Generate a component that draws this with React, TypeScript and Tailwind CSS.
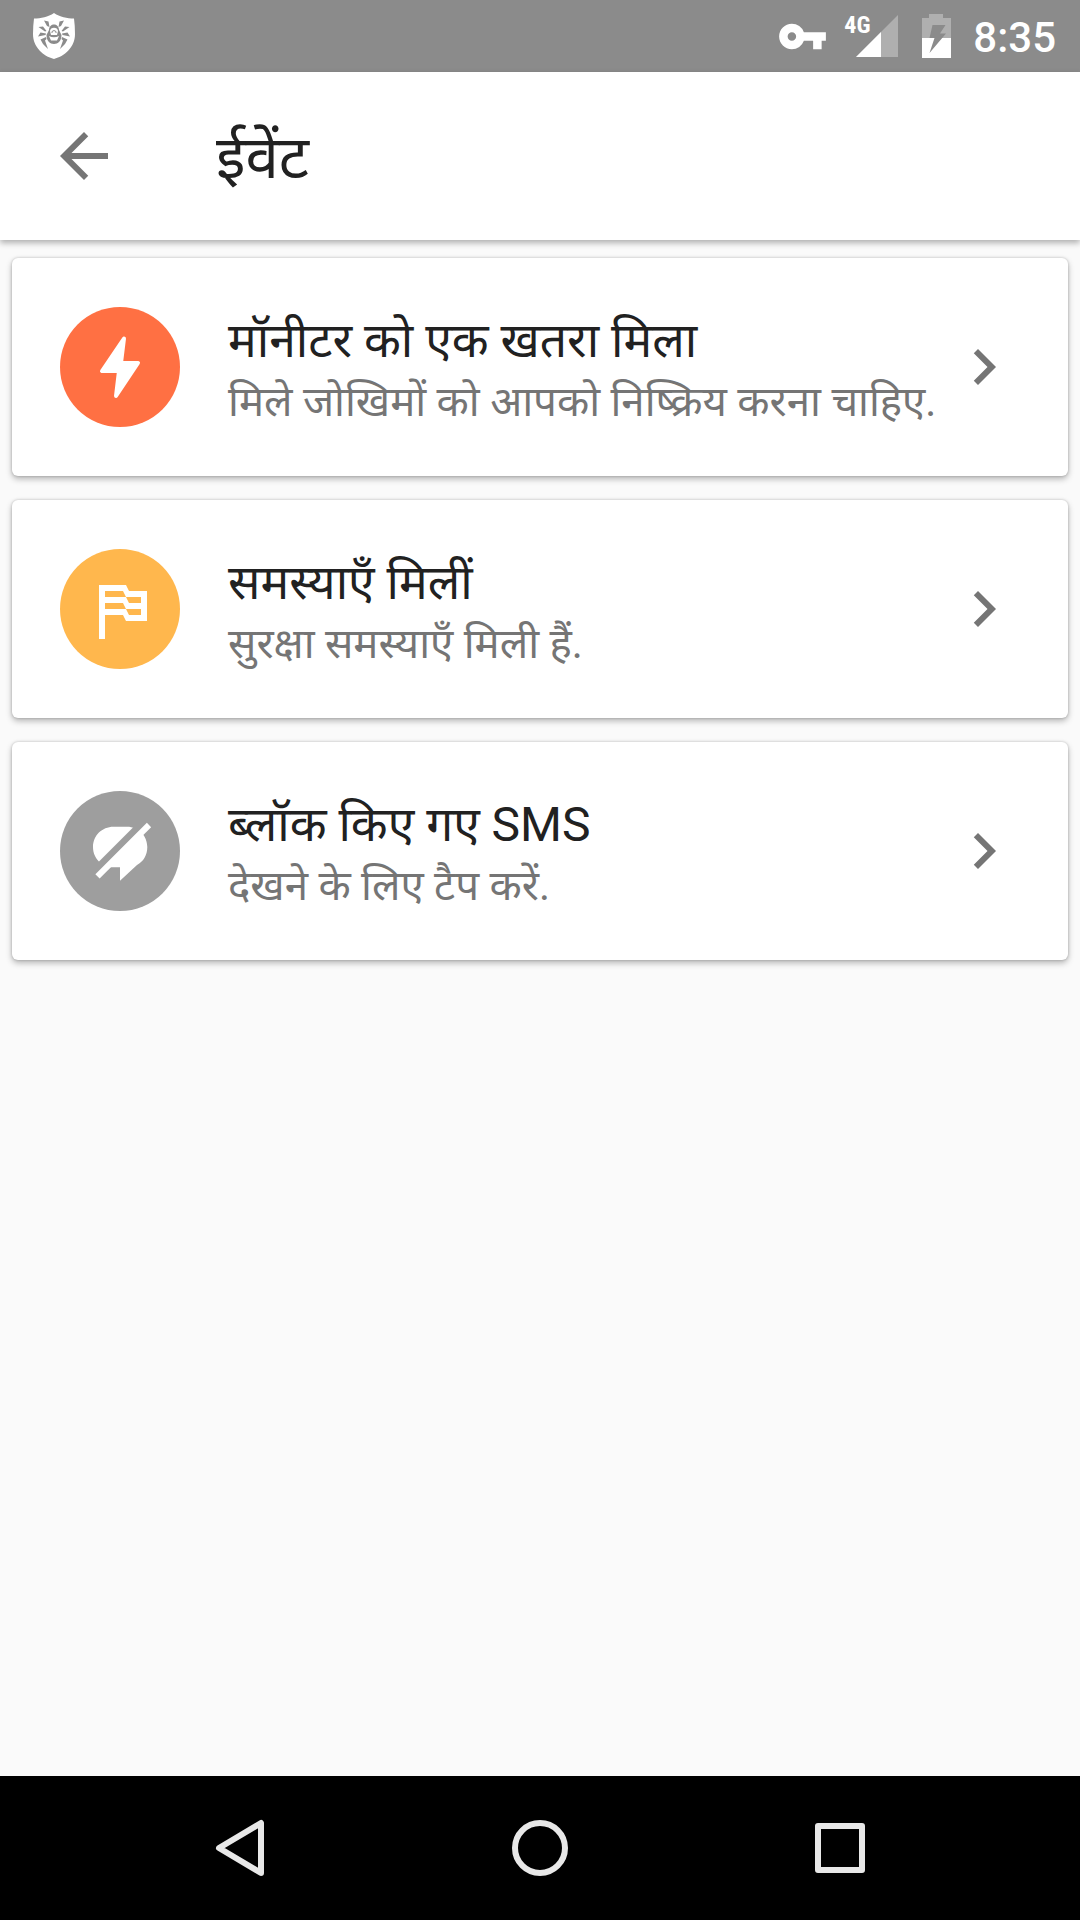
import React from 'react';
import { MdArrowBack, MdChevronRight, MdVpnKey } from 'react-icons/md';

interface EventItem {
    id: string;
    title: string;
    description: string;
    circle: string;
    icon: React.ReactNode;
}

const ThreatIcon: React.FC = () => (
    <svg viewBox="0 0 120 120" className="size-full" aria-hidden="true">
        <path
            d="M64 31.500L42 64H59L56 89L78 56H61Z"
            fill="#fff"
            stroke="#fff"
            strokeWidth="4"
            strokeLinejoin="round"
        />
    </svg>
);

const FlagIcon: React.FC = () => (
    <svg viewBox="0 0 120 120" className="size-full" aria-hidden="true">
        <path
            fill="#fff"
            fillRule="evenodd"
            d="M39 36H66L69 42H87V72H66L63 66H45V90H39Z M45 42V48H66L63 42Z M66 48L69 54H81V48Z M45 54V60H66L63 54Z M66 60L69 66H81V60Z"
        />
    </svg>
);

const BlockedSmsIcon: React.FC = () => (
    <svg viewBox="0 0 120 120" className="size-full" aria-hidden="true">
        <path
            d="M53.500 35.700H67C78.500 35.700 87.300 44.500 87.300 56C87.300 64 83.500 70.500 77 74L60 89.700V76.300H53.500C42 76.300 33 67.500 33 56S42 35.700 53.500 35.700Z"
            fill="#fff"
        />
        <path d="M28 86.500L88 26.500" stroke="#9e9e9e" strokeWidth="7" />
        <path d="M37.500 85.300L89 34" stroke="#fff" strokeWidth="6" />
    </svg>
);

const events: EventItem[] = [
    {
        id: 'threat',
        title: 'मॉनीटर को एक खतरा मिला',
        description: 'मिले जोखिमों को आपको निष्क्रिय करना चाहिए.',
        circle: 'bg-[#ff7043]',
        icon: <ThreatIcon />,
    },
    {
        id: 'problems',
        title: 'समस्याएँ मिलीं',
        description: 'सुरक्षा समस्याएँ मिली हैं.',
        circle: 'bg-[#ffb74d]',
        icon: <FlagIcon />,
    },
    {
        id: 'sms',
        title: 'ब्लॉक किए गए SMS',
        description: 'देखने के लिए टैप करें.',
        circle: 'bg-[#9e9e9e]',
        icon: <BlockedSmsIcon />,
    },
];

const ShieldIcon: React.FC = () => (
    <svg viewBox="0 0 42 46" className="h-[46px] w-[42px]" aria-hidden="true">
        <path d="M21 0C27 4 34 5.500 41 5.500Q42 13 42 21C42 34 32 43 21 46C10 43 0 34 0 21Q0 13 1 5.500C8 5.500 15 4 21 0Z" fill="#fff" />
        {/* Spider legs */}
        <g fill="#8b8b8b">
            <path d="M11 7.500L15.500 8.500L16.500 14L14 13Z M31 7.500L26.500 8.500L25.500 14L28 13Z" />
            <path d="M5.500 14L10 13.500L13.500 18L12 18.500Z M36.500 14L32 13.500L28.500 18L30 18.500Z" />
            <path d="M5 23.500L7.500 19.500L13 20.500L12.500 22Z M37 23.500L34.500 19.500L29 20.500L29.500 22Z" />
            <path d="M7.500 26.500L13 24L13.500 26L12 27.500L15 36L10 31Z M34.500 26.500L29 24L28.500 26L30 27.500L27 36L32 31Z" />
            <path d="M16 17C16 9.500 26 9.500 26 17L28.500 22C28.500 28 25 31 21 31S13.500 28 13.500 22Z" />
        </g>
        <path d="M17 18C17 13.500 25 13.500 25 18L24 22H18Z" fill="#fff" />
        <path d="M16 23Q21 25.500 26 23L24 27.500H18Z" fill="#fff" />
        <path d="M19 20V18.500Q21 16.500 23 18.500V20" fill="none" stroke="#8b8b8b" />
    </svg>
);

const SignalIcon: React.FC = () => (
    <svg viewBox="0 0 42 42" className="size-[42px]" aria-hidden="true">
        <path d="M42 0V42H0Z" fill="#afafaf" />
        <path d="M25 17V42H0Z" fill="#fff" />
    </svg>
);

const BatteryIcon: React.FC = () => (
    <svg viewBox="0 0 29 44" className="h-11 w-[29px]" aria-hidden="true">
        <path d="M7 0H21V4H29V24H0V4H7Z" fill="#afafaf" />
        <path d="M0 24H29V44H0Z" fill="#fff" />
        <path d="M10.500 11H23.500L18 19.500H24L7.500 39L12.500 24H7.500Z" fill="#8b8b8b" />
    </svg>
);

const StatusBar: React.FC = () => (
    <div className="flex h-[72px] shrink-0 items-center justify-between bg-[#8b8b8b] pr-6 pl-[33px] text-white">
        <ShieldIcon />
        <div className="flex items-center">
            <MdVpnKey size={51} />
            <div className="relative ml-7">
                <SignalIcon />
                <span className="absolute -top-1 -left-3 font-['Roboto_Condensed',Roboto,sans-serif] text-2xl leading-7 font-bold">
                    4G
                </span>
            </div>
            <div className="ml-6">
                <BatteryIcon />
            </div>
            <span className="ml-[22px] pt-1 text-[42px] leading-none font-medium">8:35</span>
        </div>
    </div>
);

const EventCard: React.FC<{ event: EventItem }> = ({ event }) => (
    <a
        href={`#${event.id}`}
        className="flex h-[218px] items-center rounded-md bg-white px-12 shadow-[0_3px_6px_rgba(0,0,0,0.28),0_0_3px_rgba(0,0,0,0.2)]"
    >
        <div className={`size-[120px] shrink-0 rounded-full ${event.circle}`}>{event.icon}</div>
        <div className="ml-12 min-w-0 flex-1 pt-1.5">
            <h2 className="text-[48px] leading-[64px] whitespace-nowrap text-[#212121]">{event.title}</h2>
            <p className="text-[42px] leading-[58px] whitespace-nowrap text-[#757575]">{event.description}</p>
        </div>
        <MdChevronRight size={72} className="shrink-0 text-[#757575]" />
    </a>
);

const NavigationBar: React.FC = () => (
    <nav className="flex h-36 shrink-0 items-center bg-black px-[90px]">
        <button aria-label="Back" className="flex flex-1 justify-center">
            <svg viewBox="0 0 60 60" className="size-[60px]" fill="none" stroke="#e8e8e8" strokeWidth="6" strokeLinejoin="round">
                <path d="M51 5V55L9 30Z" />
            </svg>
        </button>
        <button aria-label="Home" className="flex flex-1 justify-center">
            <svg viewBox="0 0 60 60" className="size-[60px]" fill="none" stroke="#e8e8e8" strokeWidth="6">
                <circle cx="30" cy="30" r="25" />
            </svg>
        </button>
        <button aria-label="Recent apps" className="flex flex-1 justify-center">
            <svg viewBox="0 0 60 60" className="size-[60px]" fill="none" stroke="#e8e8e8" strokeWidth="6" strokeLinejoin="round">
                <rect x="8" y="8" width="44" height="44" />
            </svg>
        </button>
    </nav>
);

const App: React.FC = () => {
    return (
        <div className="flex min-h-screen flex-col bg-[#fafafa] font-[Roboto,'Noto_Sans_Devanagari','Noto_Sans',sans-serif]">
            <StatusBar />
            <header className="flex h-[168px] shrink-0 items-center bg-white px-12 shadow-[0_3px_6px_rgba(0,0,0,0.3)]">
                <button aria-label="Back" className="text-[#757575]">
                    <MdArrowBack size={72} />
                </button>
                <h1 className="ml-24 pt-1 text-[60px] leading-[80px] text-[#212121]">ईवेंट</h1>
            </header>
            <main className="flex flex-1 flex-col gap-6 px-3 pt-[18px] pb-6">
                {events.map((event) => (
                    <EventCard key={event.id} event={event} />
                ))}
            </main>
            <NavigationBar />
        </div>
    );
};

export default App;
